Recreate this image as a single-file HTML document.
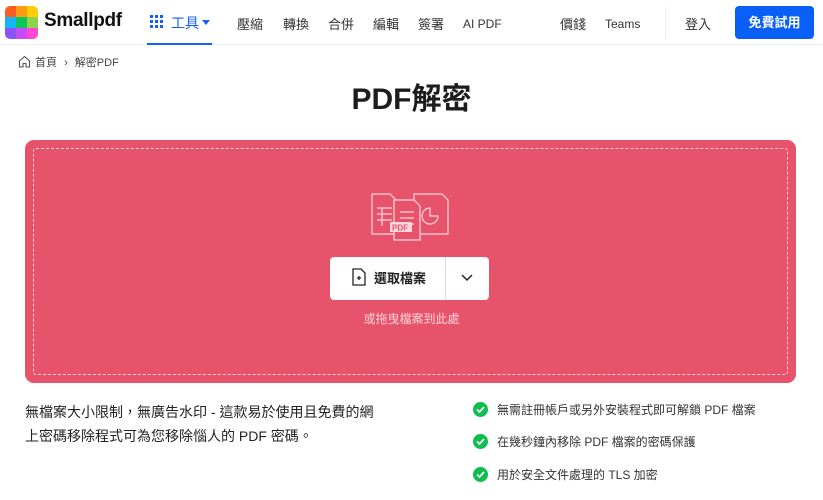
<!DOCTYPE html>
<html><head><meta charset="utf-8"><style>
*{box-sizing:border-box;margin:0;padding:0}
body{width:823px;height:500px;overflow:hidden;background:#fff;font-family:"Liberation Sans","Noto Sans CJK TC",sans-serif;color:#222;position:relative}
.abs{position:absolute}
.nav{font-size:13px;color:#333}
</style></head><body>
<div class="abs" style="left:0;top:0;width:823px;height:45px;border-bottom:1px solid #eee"></div>
<div class="abs" style="left:5px;top:6px;width:33px;height:33px;border-radius:5px;overflow:hidden;display:grid;grid-template-columns:repeat(3,1fr)">
<div style="background:#ff5b23"></div><div style="background:#ff9a17"></div><div style="background:#ffcd06"></div>
<div style="background:#12b5f5"></div><div style="background:#0cc55a"></div><div style="background:#8ed349"></div>
<div style="background:#8a55f7"></div><div style="background:#c64cf5"></div><div style="background:#ff45d3"></div></div>
<div class="abs" style="left:44px;top:10px;font-size:19px;font-weight:bold;color:#111;letter-spacing:-.3px">Smallpdf</div>
<div class="abs" style="left:150px;top:15px;width:13px;height:13px;display:grid;grid-template-columns:repeat(3,3px);gap:2px">
<i style="background:#1660f3"></i><i style="background:#1660f3"></i><i style="background:#1660f3"></i><i style="background:#1660f3"></i><i style="background:#1660f3"></i><i style="background:#1660f3"></i><i style="background:#1660f3"></i><i style="background:#1660f3"></i><i style="background:#1660f3"></i></div>
<div class="abs nav" style="left:171px;top:13px;color:#1660f3;font-size:14px">工具</div>
<div class="abs" style="left:202px;top:20px;border:4px solid transparent;border-top:5px solid #1660f3"></div>
<div class="abs" style="left:147px;top:43px;width:65px;height:2px;background:#1660f3"></div>
<div class="abs nav" style="left:237px;top:14px">壓縮</div>
<div class="abs nav" style="left:283px;top:14px">轉換</div>
<div class="abs nav" style="left:328px;top:14px">合併</div>
<div class="abs nav" style="left:373px;top:14px">編輯</div>
<div class="abs nav" style="left:418px;top:14px">簽署</div>
<div class="abs nav" style="left:463px;top:17px;font-size:12px">AI PDF</div>
<div class="abs nav" style="left:560px;top:14px">價錢</div>
<div class="abs nav" style="left:605px;top:17px;font-size:12px">Teams</div>
<div class="abs" style="left:665px;top:6px;width:1px;height:33px;background:#eee"></div>
<div class="abs nav" style="left:685px;top:14px">登入</div>
<div class="abs" style="left:735px;top:6px;width:79px;height:33px;background:#0a5ff6;border-radius:4px;color:#fff;font-size:13px;font-weight:bold;text-align:center;line-height:33px">免費試用</div>
<svg class="abs" style="left:18px;top:55px" width="13" height="13" viewBox="0 0 13 13"><path d="M1.5 6L6.5 1.5 11.5 6V12H8V8.5H5V12H1.5Z" fill="none" stroke="#555" stroke-width="1.1"/></svg>
<div class="abs" style="left:35px;top:54px;font-size:11px;color:#444">首頁 <span style="margin:0 4px">›</span> 解密PDF</div>
<div class="abs" style="left:0;width:823px;top:74px;text-align:center;font-size:30px;font-weight:bold;color:#1d1d1d">PDF解密</div>
<div class="abs" style="left:25px;top:140px;width:771px;height:243px;background:#e8536c;border-radius:9px"></div>
<div class="abs" style="left:33px;top:148px;width:755px;height:227px;border:1px dashed rgba(255,255,255,.75);border-radius:3px"></div>
<svg class="abs" style="left:370px;top:192px" width="80" height="50" viewBox="0 0 80 50" fill="none" stroke="#fbd6dc" stroke-width="1.2">
<path d="M2 2H20L26 8V42H2Z" fill="#e8536c"/><path d="M7 16H22M7 22H22M7 28H22M12 16V34"/>
<path d="M44 2H72L78 8V42H44Z" fill="#e8536c"/><path d="M60 16A8 8 0 1 0 68 24H60Z"/>
<path d="M24 8H44L50 14V48H24Z" fill="#e8536c"/><path d="M30 20H44M30 26H44M30 32H44"/>
<rect x="20" y="30" width="22" height="10" fill="#fbd6dc" stroke="none"/><text x="22" y="38.5" font-size="8" fill="#e8536c" stroke="none" font-family="Liberation Sans" font-weight="bold">PDF</text></svg>
<div class="abs" style="left:330px;top:257px;width:159px;height:43px;background:#fff;border-radius:4px"></div>
<div class="abs" style="left:445px;top:257px;width:1px;height:43px;background:#ddd"></div>
<svg class="abs" style="left:352px;top:268px" width="14" height="18" viewBox="0 0 14 18"><path d="M1 1H9L13 5V17H1Z M5 10H9M7 8V12" fill="none" stroke="#222" stroke-width="1.3"/></svg>
<div class="abs" style="left:374px;top:268px;font-size:13px;font-weight:bold;color:#222">選取檔案</div>
<svg class="abs" style="left:461px;top:274px" width="12" height="8"><path d="M1 1L6 6 11 1" fill="none" stroke="#222" stroke-width="1.5"/></svg>
<div class="abs" style="left:0;width:823px;top:310px;text-align:center;font-size:12px;color:#fbd6dc">或拖曳檔案到此處</div>
<div class="abs" style="left:25px;top:400px;width:356px;font-size:14px;line-height:24px;color:#222">無檔案大小限制，無廣告水印 - 這款易於使用且免費的網上密碼移除程式可為您移除惱人的 PDF 密碼。</div>
<div class="abs" style="left:473px;top:402px;font-size:12px;color:#333;line-height:16px">
<div style="height:32px"><span style="display:inline-block;width:15px;height:15px;border-radius:50%;background:#0dbd4e;vertical-align:-3px;margin-right:9px;position:relative"><svg width="15" height="15" style="position:absolute;left:0;top:0"><path d="M4 7.5L6.5 10 11 5" fill="none" stroke="#fff" stroke-width="1.8"/></svg></span>無需註冊帳戶或另外安裝程式即可解鎖 PDF 檔案</div>
<div style="height:33px"><span style="display:inline-block;width:15px;height:15px;border-radius:50%;background:#0dbd4e;vertical-align:-3px;margin-right:9px;position:relative"><svg width="15" height="15" style="position:absolute;left:0;top:0"><path d="M4 7.5L6.5 10 11 5" fill="none" stroke="#fff" stroke-width="1.8"/></svg></span>在幾秒鐘內移除 PDF 檔案的密碼保護</div>
<div><span style="display:inline-block;width:15px;height:15px;border-radius:50%;background:#0dbd4e;vertical-align:-3px;margin-right:9px;position:relative"><svg width="15" height="15" style="position:absolute;left:0;top:0"><path d="M4 7.5L6.5 10 11 5" fill="none" stroke="#fff" stroke-width="1.8"/></svg></span>用於安全文件處理的 TLS 加密</div>
</div>
</body></html>
